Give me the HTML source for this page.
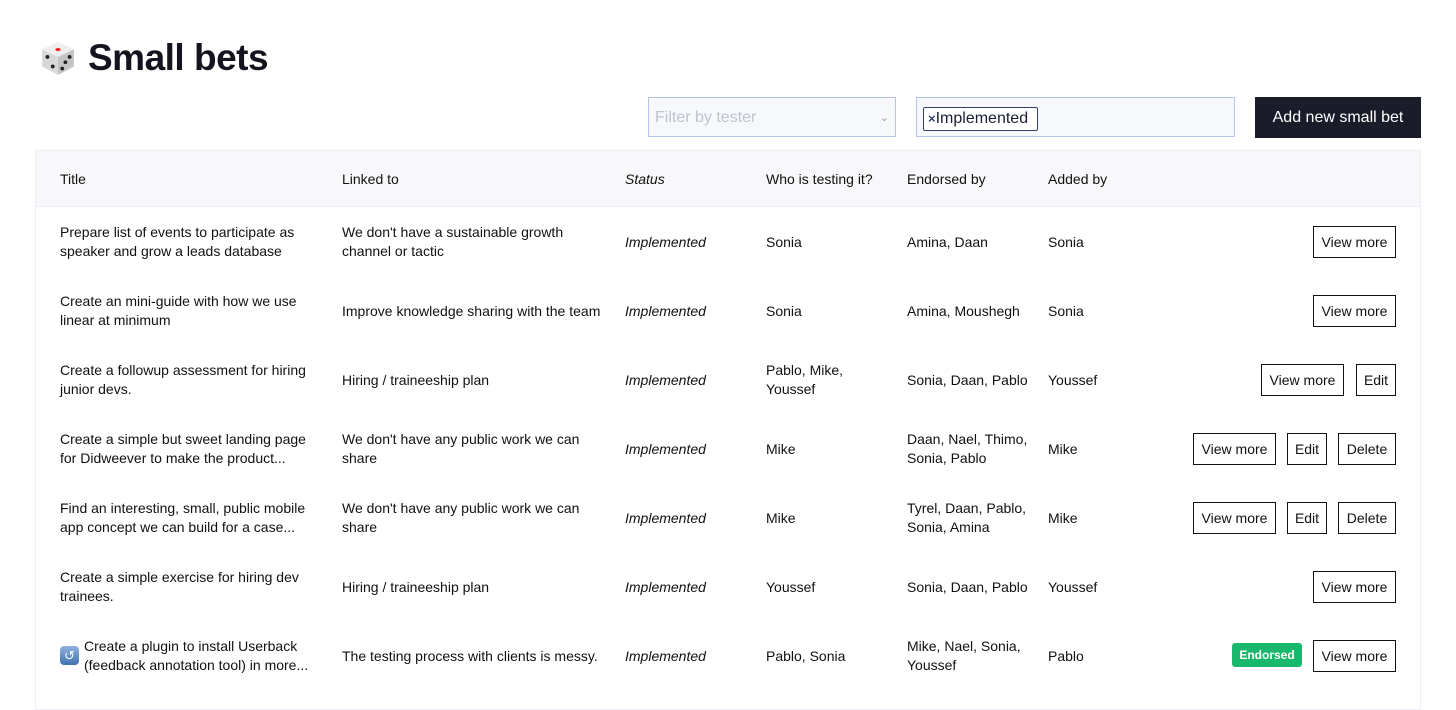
<!DOCTYPE html><html><head><style>
*{box-sizing:border-box;margin:0;padding:0}
body{width:1456px;height:695px;background:#fff;font-family:"Liberation Sans",sans-serif;color:#111;position:relative;overflow:hidden;font-size:14px}
.a{position:absolute}
h1{position:absolute;left:88px;top:37px;font-size:37px;font-weight:bold;color:#14141f;letter-spacing:-0.5px}
.tbl{position:absolute;left:35px;top:150px;width:1386px;height:560px;border:1px solid #eceef3}
.hd{position:absolute;left:0;top:0;width:100%;height:56px;background:#f8f8fb;border-bottom:1px solid #eceef3}
.c{position:absolute;line-height:19px;font-size:14px;margin-top:1px}
.btn{position:absolute;height:32px;border:1px solid #111;background:#fff;font-size:14px;line-height:30px;text-align:center}
</style></head><body>
<svg class="a" style="left:39px;top:39px" width="38" height="38" viewBox="0 0 36 36">
<path d="M3 10 L18 3 L33 10 L33 26 L18 34 L3 26Z" fill="#d8d8d8"/>
<path d="M3 10 L18 17 L33 10 L18 3Z" fill="#eee"/>
<path d="M18 17 L33 10 L33 26 L18 34Z" fill="#c4c4c4"/>
<ellipse cx="18" cy="10" rx="2.5" ry="1.5" fill="#e22"/>
<circle cx="8" cy="17" r="1.8" fill="#222"/><circle cx="13" cy="26" r="1.8" fill="#222"/>
<circle cx="22" cy="28" r="1.8" fill="#222"/><circle cx="25" cy="22" r="1.8" fill="#222"/><circle cx="29" cy="17" r="1.8" fill="#222"/>
</svg>
<h1>Small bets</h1>
<div class="a" style="left:648px;top:97px;width:248px;height:40px;border:1px solid #b8c3ea;background:#f7f8fc;color:#c0c3cc;font-size:16px;line-height:40px;padding-left:6px">Filter by tester<span style="position:absolute;right:6px;top:0;font-size:11px;color:#999">&#8964;</span></div>
<div class="a" style="left:916px;top:97px;width:319px;height:40px;border:1px solid #b8c3ea;background:#f7f8fc"></div>
<div class="a" style="left:923px;top:107px;width:115px;height:24px;border:1px solid #34406b;border-radius:2px;background:#fff;font-size:16px;line-height:22px;padding-left:4px;color:#1a1f33;white-space:nowrap"><span style="font-size:13px;font-weight:bold;color:#34406b">×</span>Implemented</div>
<div class="a" style="left:1255px;top:97px;width:166px;height:41px;background:#1b1c2a;color:#fff;font-size:16px;line-height:41px;text-align:center">Add new small bet</div>
<div class="tbl"><div class="hd"></div></div>
<div class="c" style="left:60px;top:169px">Title</div>
<div class="c" style="left:342px;top:169px">Linked to</div>
<div class="c" style="left:625px;top:169px;font-style:italic">Status</div>
<div class="c" style="left:766px;top:169px">Who is testing it?</div>
<div class="c" style="left:907px;top:169px">Endorsed by</div>
<div class="c" style="left:1048px;top:169px">Added by</div>

<div class="c" style="left:60px;top:222px">Prepare list of events to participate as<br>speaker and grow a leads database</div>
<div class="c" style="left:342px;top:222px">We don't have a sustainable growth<br>channel or tactic</div>
<div class="c" style="left:625px;top:232px;font-style:italic">Implemented</div>
<div class="c" style="left:766px;top:232px">Sonia</div>
<div class="c" style="left:907px;top:232px">Amina, Daan</div>
<div class="c" style="left:1048px;top:232px">Sonia</div>
<div class="btn" style="left:1313px;top:226px;width:83px">View more</div>

<div class="c" style="left:60px;top:291px">Create an mini-guide with how we use<br>linear at minimum</div>
<div class="c" style="left:342px;top:301px">Improve knowledge sharing with the team</div>
<div class="c" style="left:625px;top:301px;font-style:italic">Implemented</div>
<div class="c" style="left:766px;top:301px">Sonia</div>
<div class="c" style="left:907px;top:301px">Amina, Moushegh</div>
<div class="c" style="left:1048px;top:301px">Sonia</div>
<div class="btn" style="left:1313px;top:295px;width:83px">View more</div>

<div class="c" style="left:60px;top:360px">Create a followup assessment for hiring<br>junior devs.</div>
<div class="c" style="left:342px;top:370px">Hiring / traineeship plan</div>
<div class="c" style="left:625px;top:370px;font-style:italic">Implemented</div>
<div class="c" style="left:766px;top:360px">Pablo, Mike,<br>Youssef</div>
<div class="c" style="left:907px;top:370px">Sonia, Daan, Pablo</div>
<div class="c" style="left:1048px;top:370px">Youssef</div>
<div class="btn" style="left:1261px;top:364px;width:83px">View more</div>
<div class="btn" style="left:1356px;top:364px;width:40px">Edit</div>

<div class="c" style="left:60px;top:429px">Create a simple but sweet landing page<br>for Didweever to make the product...</div>
<div class="c" style="left:342px;top:429px">We don't have any public work we can<br>share</div>
<div class="c" style="left:625px;top:439px;font-style:italic">Implemented</div>
<div class="c" style="left:766px;top:439px">Mike</div>
<div class="c" style="left:907px;top:429px">Daan, Nael, Thimo,<br>Sonia, Pablo</div>
<div class="c" style="left:1048px;top:439px">Mike</div>
<div class="btn" style="left:1193px;top:433px;width:83px">View more</div>
<div class="btn" style="left:1287px;top:433px;width:40px">Edit</div>
<div class="btn" style="left:1338px;top:433px;width:58px">Delete</div>

<div class="c" style="left:60px;top:498px">Find an interesting, small, public mobile<br>app concept we can build for a case...</div>
<div class="c" style="left:342px;top:498px">We don't have any public work we can<br>share</div>
<div class="c" style="left:625px;top:508px;font-style:italic">Implemented</div>
<div class="c" style="left:766px;top:508px">Mike</div>
<div class="c" style="left:907px;top:498px">Tyrel, Daan, Pablo,<br>Sonia, Amina</div>
<div class="c" style="left:1048px;top:508px">Mike</div>
<div class="btn" style="left:1193px;top:502px;width:83px">View more</div>
<div class="btn" style="left:1287px;top:502px;width:40px">Edit</div>
<div class="btn" style="left:1338px;top:502px;width:58px">Delete</div>

<div class="c" style="left:60px;top:567px">Create a simple exercise for hiring dev<br>trainees.</div>
<div class="c" style="left:342px;top:577px">Hiring / traineeship plan</div>
<div class="c" style="left:625px;top:577px;font-style:italic">Implemented</div>
<div class="c" style="left:766px;top:577px">Youssef</div>
<div class="c" style="left:907px;top:577px">Sonia, Daan, Pablo</div>
<div class="c" style="left:1048px;top:577px">Youssef</div>
<div class="btn" style="left:1313px;top:571px;width:83px">View more</div>

<div class="a" style="left:60px;top:646px;width:19px;height:19px;border-radius:4px;background:linear-gradient(#8fb2dc,#4272b0);color:#fff;font-size:13px;line-height:19px;text-align:center">&#8634;</div>
<div class="c" style="left:84px;top:636px">Create a plugin to install Userback<br>(feedback annotation tool) in more...</div>
<div class="c" style="left:342px;top:646px">The testing process with clients is messy.</div>
<div class="c" style="left:625px;top:646px;font-style:italic">Implemented</div>
<div class="c" style="left:766px;top:646px">Pablo, Sonia</div>
<div class="c" style="left:907px;top:636px">Mike, Nael, Sonia,<br>Youssef</div>
<div class="c" style="left:1048px;top:646px">Pablo</div>
<div class="a" style="left:1232px;top:643px;width:70px;height:24px;border-radius:3px;background:#1ab86c;color:#fff;font-size:12px;font-weight:bold;line-height:24px;text-align:center">Endorsed</div>
<div class="btn" style="left:1313px;top:640px;width:83px">View more</div>
</body></html>
